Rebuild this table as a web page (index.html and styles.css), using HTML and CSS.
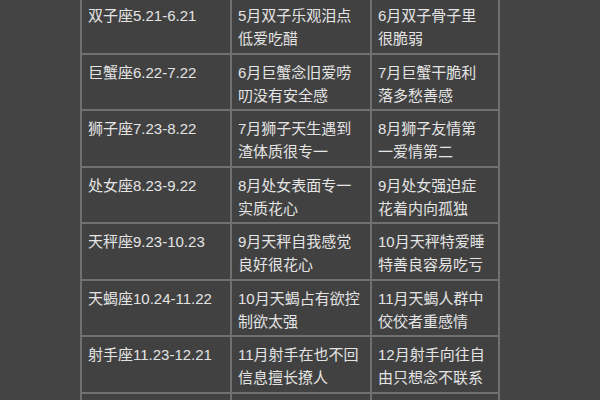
FILE: index.html
```html
<!DOCTYPE html>
<html lang="zh">
<head>
<meta charset="utf-8">
<title>星座表</title>
<link rel="stylesheet" href="styles.css">
</head>
<body>
<div class="page">
  <div class="table">
    <div class="cell">双子座5.21-6.21</div>
    <div class="cell">5月双子乐观泪点<br>低爱吃醋</div>
    <div class="cell">6月双子骨子里<br>很脆弱</div>

    <div class="cell">巨蟹座6.22-7.22</div>
    <div class="cell">6月巨蟹念旧爱唠<br>叨没有安全感</div>
    <div class="cell">7月巨蟹干脆利<br>落多愁善感</div>

    <div class="cell">狮子座7.23-8.22</div>
    <div class="cell">7月狮子天生遇到<br>渣体质很专一</div>
    <div class="cell">8月狮子友情第<br>一爱情第二</div>

    <div class="cell">处女座8.23-9.22</div>
    <div class="cell">8月处女表面专一<br>实质花心</div>
    <div class="cell">9月处女强迫症<br>花着内向孤独</div>

    <div class="cell">天秤座9.23-10.23</div>
    <div class="cell">9月天秤自我感觉<br>良好很花心</div>
    <div class="cell">10月天秤特爱睡<br>特善良容易吃亏</div>

    <div class="cell">天蝎座10.24-11.22</div>
    <div class="cell">10月天蝎占有欲控<br>制欲太强</div>
    <div class="cell">11月天蝎人群中<br>佼佼者重感情</div>

    <div class="cell">射手座11.23-12.21</div>
    <div class="cell">11月射手在也不回<br>信息擅长撩人</div>
    <div class="cell">12月射手向往自<br>由只想念不联系</div>

    <div class="cell"></div>
    <div class="cell"></div>
    <div class="cell"></div>
  </div>
</div>
</body>
</html>
```

FILE: styles.css
```css
html, body {
  margin: 0;
  padding: 0;
  background: #444444;
  overflow: hidden;
}

.page {
  width: 600px;
  height: 400px;
  overflow: hidden;
  padding-left: 80px;
  box-sizing: border-box;
}

.table {
  margin-top: -4px;
  width: 420px;
  box-sizing: border-box;
  display: grid;
  grid-template-columns: 148px 138px 126px;
  grid-auto-rows: 54.5px;
  gap: 2px;
  padding: 2px;
  background: #707070;
  font-family: "Liberation Sans", "Noto Sans CJK SC", sans-serif;
  font-size: 15px;
  line-height: 23px;
  color: #e4e4e4;
}

.cell {
  background: #414141;
  padding: 6px 5px 0 6px;
  white-space: nowrap;
  overflow: hidden;
}
```
